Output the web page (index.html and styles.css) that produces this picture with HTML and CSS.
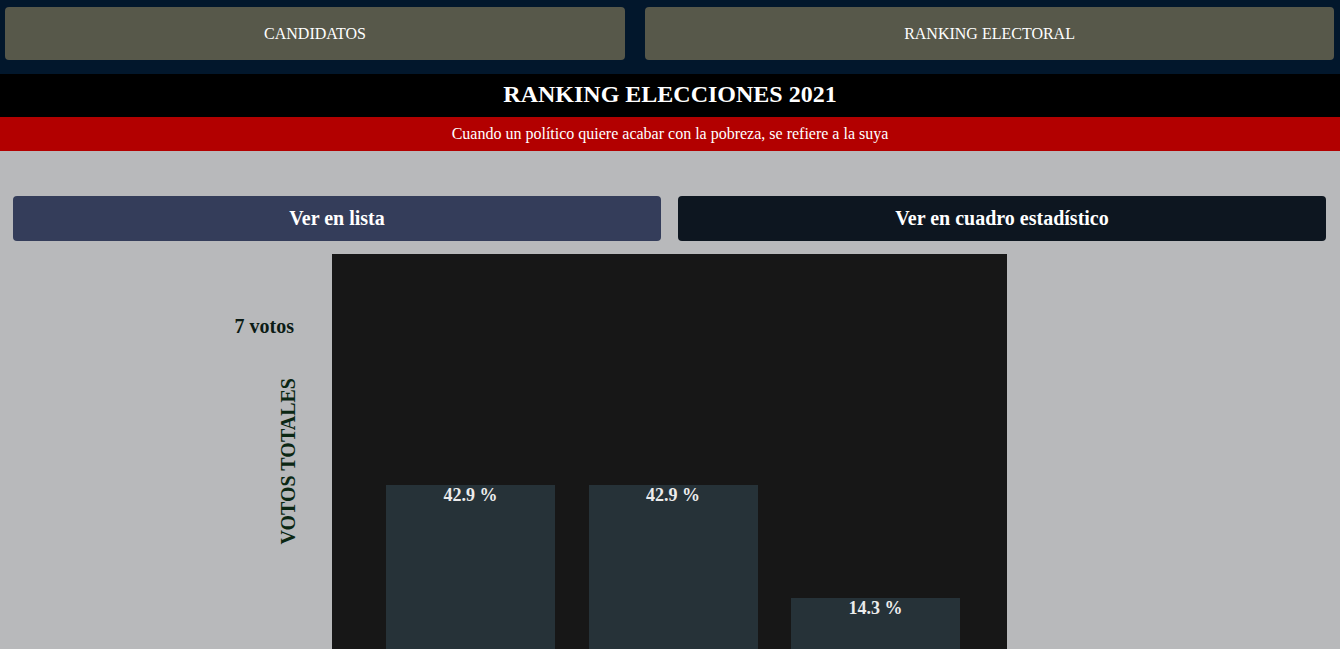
FILE: index.html
```html
<!DOCTYPE html>
<html lang="es">
<head>
<meta charset="utf-8">
<title>Ranking Elecciones 2021</title>
<link rel="stylesheet" href="styles.css">
</head>
<body>
<nav class="topnav">
  <a class="nav-btn" href="#">CANDIDATOS</a>
  <a class="nav-btn" href="#">RANKING ELECTORAL</a>
</nav>
<header class="title-band">
  <h1>RANKING ELECCIONES 2021</h1>
</header>
<div class="quote-band">Cuando un político quiere acabar con la pobreza, se refiere a la suya</div>
<main class="content">
  <div class="view-toggle">
    <button class="view-btn view-list">Ver en lista</button>
    <button class="view-btn view-chart">Ver en cuadro estadístico</button>
  </div>
  <section class="chart">
    <div class="axis">
      <div class="axis-max">7 votos</div>
      <div class="axis-title">VOTOS TOTALES</div>
    </div>
    <div class="panel">
      <div class="bars">
        <div class="bar" style="height: 42.9%"><span class="bar-label">42.9 %</span></div>
        <div class="bar" style="height: 42.9%"><span class="bar-label">42.9 %</span></div>
        <div class="bar" style="height: 14.3%"><span class="bar-label">14.3 %</span></div>
      </div>
    </div>
    <div class="spacer"></div>
  </section>
</main>
</body>
</html>
```
FILE: styles.css
```css
* { box-sizing: border-box; }

html, body {
  margin: 0;
  padding: 0;
}

body {
  background: #b8b9bb;
  font-family: "Liberation Serif", "Times New Roman", serif;
  overflow: hidden;
}

.topnav {
  display: flex;
  gap: 20px;
  padding: 7px 6px 14px 5px;
  background: #02172c;
}

.nav-btn {
  flex: 1 1 auto;
  height: 53px;
  display: flex;
  align-items: center;
  justify-content: center;
  background: #57584a;
  color: #ffffff;
  font-size: 16px;
  text-decoration: none;
  border-radius: 4px;
}

.title-band {
  background: #000000;
  height: 43px;
  display: flex;
  align-items: center;
  justify-content: center;
  padding-bottom: 3px;
}

.title-band h1 {
  margin: 0;
  color: #ffffff;
  font-size: 24px;
  font-weight: bold;
  line-height: 1;
}

.quote-band {
  background: #b20000;
  color: #ffffff;
  height: 34px;
  display: flex;
  align-items: center;
  justify-content: center;
  font-size: 16px;
}

.content {
  padding-top: 45px;
}

.view-toggle {
  display: flex;
  gap: 17px;
  padding: 0 14px 0 13px;
}

.view-btn {
  flex: 1 1 0;
  height: 45px;
  border: none;
  border-radius: 4px;
  color: #ffffff;
  font-family: "Liberation Serif", "Times New Roman", serif;
  font-size: 20px;
  font-weight: bold;
  padding: 0;
}

.view-list { background: #343d5a; }
.view-chart { background: #0d1620; }

.chart {
  display: grid;
  grid-template-columns: 332px 675px 1fr;
  margin-top: 13px;
}

.axis {
  display: flex;
  flex-direction: column;
  align-items: flex-end;
  padding-right: 38px;
}

.axis-max {
  margin-top: 61px;
  font-size: 20px;
  font-weight: bold;
  color: #0c1c16;
  line-height: 23px;
}

.axis-title {
  margin-top: 40px;
  margin-right: -6px;
  writing-mode: vertical-rl;
  transform: rotate(180deg);
  font-size: 20px;
  font-weight: bold;
  color: #0b2713;
  line-height: 23px;
}

.panel {
  background: #171717;
  height: 420px;
  padding-top: 5px;
}

.bars {
  display: flex;
  align-items: flex-end;
  gap: 33.5px;
  padding-left: 54px;
  height: 395px;
  width: 100%;
}

.bar {
  width: 169px;
  background: #263238;
  display: flex;
  justify-content: center;
  align-items: flex-start;
}

.bar-label {
  color: #ececec;
  font-size: 18px;
  font-weight: bold;
  line-height: 21px;
}
```
